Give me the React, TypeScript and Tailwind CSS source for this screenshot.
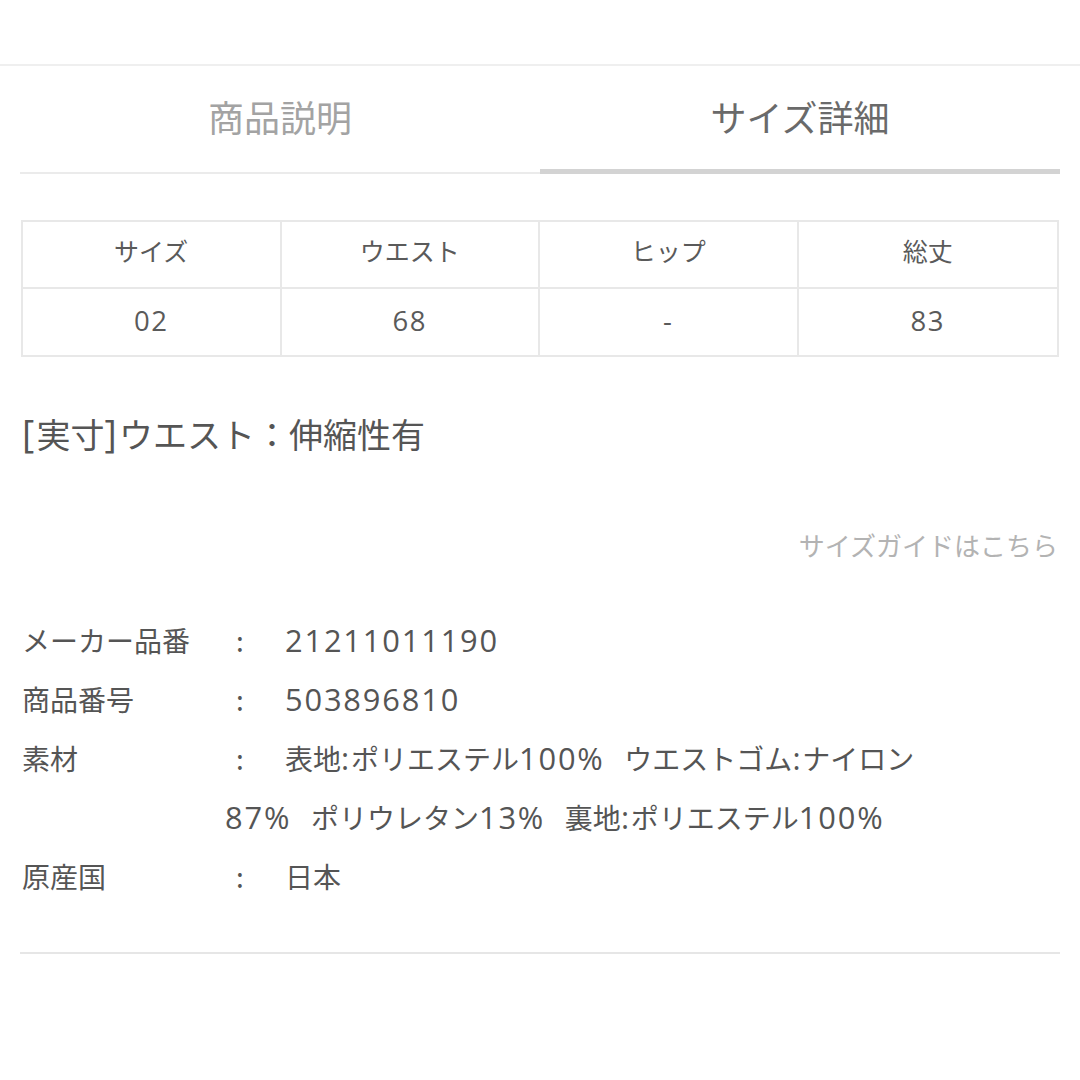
import React from "react";

const FONT = '"Noto Sans CJK JP", "Noto Sans", sans-serif';

function M({ t }: { t: string }) {
  const parts = t.split(/([\x20-\x7E]+)/);
  return (
    <>
      {parts.map((p, i) =>
        /^[\x20-\x7E]+$/.test(p) ? (
          <span
            key={i}
            className="text-[1.1em] tracking-[0.06em] whitespace-pre"
            style={{ fontFamily: '"Open Sans", "Noto Sans", sans-serif' }}
          >
            {p}
          </span>
        ) : (
          <span key={i}>{p}</span>
        )
      )}
    </>
  );
}

const specs: { label: string; lines: string[] }[] = [
  { label: "メーカー品番", lines: ["21211011190"] },
  { label: "商品番号", lines: ["503896810"] },
  {
    label: "素材",
    lines: [
      "表地:ポリエステル100%  ウエストゴム:ナイロン",
      "87%  ポリウレタン13%  裏地:ポリエステル100%",
    ],
  },
  { label: "原産国", lines: ["日本"] },
];

export default function App() {
  const head = ["サイズ", "ウエスト", "ヒップ", "総丈"];
  const vals = ["02", "68", "-", "83"];
  return (
    <div className="w-[1080px] h-[1080px] bg-white overflow-hidden" style={{ fontFamily: FONT }}>
      <div className="h-[64px]" />
      <div className="border-t-2 border-[#efefef]" />
      <div className="px-[20px]">
        {/* tabs */}
        <div className="flex items-end">
          <div className="flex-1 h-[108px] pb-[6px] border-b-2 border-[#ebebeb] flex items-center justify-center text-[36px] text-[#a3a3a3] leading-none">
            商品説明
          </div>
          <div className="flex-1 h-[108px] pb-[3px] border-b-[5px] border-[#d3d3d3] flex items-center justify-center text-[36px] text-[#6a6a6a] leading-none">
            サイズ詳細
          </div>
        </div>

        {/* table */}
        <div className="mt-[46px] mx-[1px] border-2 border-[#e8e8e8] text-[25px] text-[#5a5a5a]">
          <div className="grid grid-cols-4 h-[67px] border-b-2 border-[#e8e8e8]">
            {head.map((h, i) => (
              <div
                key={i}
                className={`flex items-center justify-center pb-[7px] ${i < 3 ? "border-r-2 border-[#e8e8e8]" : ""}`}
              >
                {h}
              </div>
            ))}
          </div>
          <div className="grid grid-cols-4 h-[66px]">
            {vals.map((v, i) => (
              <div
                key={i}
                className={`flex items-center justify-center pb-[3px] ${i < 3 ? "border-r-2 border-[#e8e8e8]" : ""}`}
              >
                <M t={v} />
              </div>
            ))}
          </div>
        </div>

        {/* note */}
        <div className="mt-[53px] pl-[2px] text-[34px] leading-[48px] text-[#555555]">
          <M t="[実寸]ウエスト：伸縮性有" />
        </div>

        <div className="mt-[67px] text-right pr-[2px] text-[26px] leading-[40px] text-[#b3b3b3]">
          サイズガイドはこちら
        </div>

        {/* specs */}
        <div className="mt-[46px] pl-[2px] text-[28px] leading-[59px] text-[#555555]">
          {specs.map((s, i) => (
            <div key={i} className="flex">
              <div className="w-[203px] shrink-0">{s.label}</div>
              <div className="flex-1">
                {s.lines.map((l, j) => (
                  <div key={j} className={j === 0 ? "flex" : ""}>
                    {j === 0 ? (
                      <>
                        <span className="w-[60px] shrink-0 text-left pl-[11px]">:</span>
                        <span>
                          <M t={l} />
                        </span>
                      </>
                    ) : (
                      <M t={l} />
                    )}
                  </div>
                ))}
              </div>
            </div>
          ))}
        </div>

        <div className="mt-[46px] border-t-2 border-[#e6e6e6]" />
      </div>
    </div>
  );
}
